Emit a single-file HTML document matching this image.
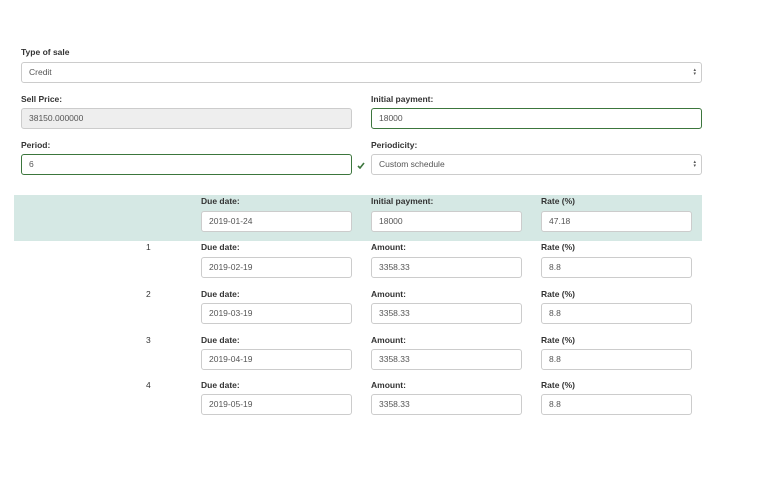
<!DOCTYPE html>
<html><head><meta charset="utf-8"><style>
body{margin:0;width:757px;height:499px;background:#fff;font-family:"Liberation Sans",Arial,sans-serif;position:relative;overflow:hidden;color:#333}
.l{position:absolute;font-size:8.5px;font-weight:bold;color:#333}
.i{position:absolute;box-sizing:border-box;height:21px;border:1px solid #ccc;border-radius:3px;background:#fff;font-size:8.5px;color:#555;padding-left:7px;line-height:19px}
.g{border-color:#3c763d}
.d{background:#eee}
.s::after{content:"\25B4\A\25BE";white-space:pre;position:absolute;right:5px;top:5px;font-size:5px;line-height:4px;color:#555}
.n{position:absolute;font-size:8.5px;color:#333;left:146px}
.band{position:absolute;left:14px;top:195px;width:688px;height:46px;background:#d5e8e4}
</style></head><body>
<div class="l" style="left:21px;top:47px">Type of sale</div>
<div class="i s" style="left:21px;top:62px;width:681px">Credit</div>
<div class="l" style="left:21px;top:94px">Sell Price:</div>
<div class="i d" style="left:21px;top:108px;width:331px">38150.000000</div>
<div class="l" style="left:371px;top:94px">Initial payment:</div>
<div class="i g" style="left:371px;top:108px;width:331px">18000</div>
<div class="l" style="left:21px;top:140px">Period:</div>
<div class="i g" style="left:21px;top:154px;width:331px">6</div>
<svg style="position:absolute;left:357px;top:162px" width="8" height="7" viewBox="0 0 8 7"><path d="M1 4 L3 6 L7 1" stroke="#3c763d" stroke-width="1.6" fill="none"/></svg>
<div class="l" style="left:371px;top:140px">Periodicity:</div>
<div class="i s" style="left:371px;top:154px;width:331px">Custom schedule</div>
<div class="band"></div>
<div class="l" style="left:201px;top:196px">Due date:</div>
<div class="i" style="left:201px;top:211px;width:151px">2019-01-24</div>
<div class="l" style="left:371px;top:196px">Initial payment:</div>
<div class="i" style="left:371px;top:211px;width:151px">18000</div>
<div class="l" style="left:541px;top:196px">Rate (%)</div>
<div class="i" style="left:541px;top:211px;width:151px">47.18</div>

<div class="n" style="top:242px">1</div>
<div class="l" style="left:201px;top:242px">Due date:</div>
<div class="i" style="left:201px;top:257px;width:151px">2019-02-19</div>
<div class="l" style="left:371px;top:242px">Amount:</div>
<div class="i" style="left:371px;top:257px;width:151px">3358.33</div>
<div class="l" style="left:541px;top:242px">Rate (%)</div>
<div class="i" style="left:541px;top:257px;width:151px">8.8</div>

<div class="n" style="top:289px">2</div>
<div class="l" style="left:201px;top:289px">Due date:</div>
<div class="i" style="left:201px;top:303px;width:151px">2019-03-19</div>
<div class="l" style="left:371px;top:289px">Amount:</div>
<div class="i" style="left:371px;top:303px;width:151px">3358.33</div>
<div class="l" style="left:541px;top:289px">Rate (%)</div>
<div class="i" style="left:541px;top:303px;width:151px">8.8</div>

<div class="n" style="top:335px">3</div>
<div class="l" style="left:201px;top:335px">Due date:</div>
<div class="i" style="left:201px;top:349px;width:151px">2019-04-19</div>
<div class="l" style="left:371px;top:335px">Amount:</div>
<div class="i" style="left:371px;top:349px;width:151px">3358.33</div>
<div class="l" style="left:541px;top:335px">Rate (%)</div>
<div class="i" style="left:541px;top:349px;width:151px">8.8</div>

<div class="n" style="top:380px">4</div>
<div class="l" style="left:201px;top:380px">Due date:</div>
<div class="i" style="left:201px;top:394px;width:151px">2019-05-19</div>
<div class="l" style="left:371px;top:380px">Amount:</div>
<div class="i" style="left:371px;top:394px;width:151px">3358.33</div>
<div class="l" style="left:541px;top:380px">Rate (%)</div>
<div class="i" style="left:541px;top:394px;width:151px">8.8</div>
</body></html>
